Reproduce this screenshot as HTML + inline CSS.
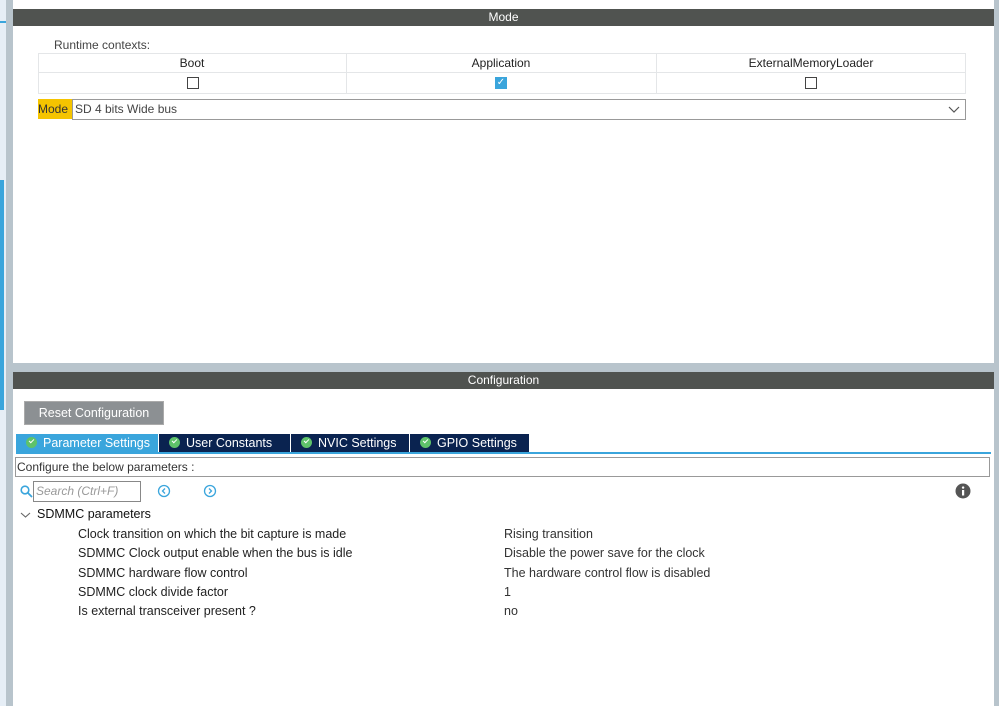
<!DOCTYPE html>
<html><head><style>
*{margin:0;padding:0;box-sizing:border-box}
body{width:999px;height:706px;position:relative;overflow:hidden;background:#fff;font-family:"Liberation Sans",sans-serif;font-size:12px;color:#222}
.a{position:absolute}
.hdr{background:#505350;color:#fff;text-align:center;line-height:17px;font-size:12px}
.cb{width:12px;height:12px;border:1px solid #444;background:#fff}
.tab{position:absolute;top:434px;height:18px;background:#0a2350;color:#fff;line-height:18px;font-size:12.5px;padding-left:10px}
.ck{display:inline-block;width:11px;height:11px;border-radius:50%;background:#5ec26a;vertical-align:-1px;margin-right:6px;position:relative}
.ck:after{content:"";position:absolute;left:3px;top:2px;width:4px;height:2px;border-left:1.5px solid #fff;border-bottom:1.5px solid #fff;transform:rotate(-45deg)}
.row{position:absolute;left:78px;font-size:12.5px;color:#222}
.val{position:absolute;left:504px;font-size:12.5px;color:#333}
</style></head><body>
<div class="a" style="left:0;top:0;width:6px;height:706px;background:#e6eef6"></div>
<div class="a" style="left:0;top:21px;width:6px;height:2px;background:#3aa5dc"></div>
<div class="a" style="left:0;top:180px;width:4px;height:230px;background:#3aa5dc"></div>
<div class="a" style="left:6px;top:0;width:7px;height:706px;background:#b8c4cc"></div>
<div class="a" style="left:994px;top:0;width:5px;height:706px;background:#b8c4cc"></div>
<div class="a" style="left:13px;top:363px;width:981px;height:9px;background:#b8c4cc"></div>
<div class="a hdr" style="left:13px;top:9px;width:981px;height:17px">Mode</div>
<div class="a" style="left:54px;top:38px;color:#444">Runtime contexts:</div>
<div class="a" style="left:38px;top:53px;width:928px;height:41px;border:1px solid #e4e6e8"></div>
<div class="a" style="left:38px;top:72px;width:928px;height:1px;background:#e4e6e8"></div>
<div class="a" style="left:346px;top:53px;width:1px;height:41px;background:#e4e6e8"></div>
<div class="a" style="left:656px;top:53px;width:1px;height:41px;background:#e4e6e8"></div>
<div class="a" style="left:38px;top:56px;width:308px;text-align:center">Boot</div>
<div class="a" style="left:346px;top:56px;width:310px;text-align:center">Application</div>
<div class="a" style="left:656px;top:56px;width:310px;text-align:center">ExternalMemoryLoader</div>
<div class="a cb" style="left:187px;top:77px"></div>
<div class="a" style="left:495px;top:77px;width:12px;height:12px;background:#3aa5dc;color:#fff;font-size:10px;line-height:12px;text-align:center">✓</div>
<div class="a cb" style="left:805px;top:77px"></div>
<div class="a" style="left:38px;top:99px;width:34px;height:20px;background:#f5c400;line-height:20px;color:#333">Mode</div>
<div class="a" style="left:72px;top:99px;width:894px;height:21px;border:1px solid #999;line-height:19px;padding-left:2px;color:#444">SD 4 bits Wide bus</div>
<svg class="a" style="left:948px;top:104px" width="12" height="10"><path d="M1 3 L6 8 L11 3" stroke="#555" fill="none" stroke-width="1.2"/></svg>
<div class="a hdr" style="left:13px;top:372px;width:981px;height:17px">Configuration</div>
<div class="a" style="left:24px;top:401px;width:140px;height:24px;background:#8c9093;border:1px solid #aaa;color:#fff;text-align:center;line-height:22px;font-size:12.5px">Reset Configuration</div>
<div class="tab" style="left:16px;width:142px;background:#3aa5dc"><span class="ck"></span>Parameter Settings</div>
<div class="tab" style="left:159px;width:131px"><span class="ck"></span>User Constants</div>
<div class="tab" style="left:291px;width:118px"><span class="ck"></span>NVIC Settings</div>
<div class="tab" style="left:410px;width:119px"><span class="ck"></span>GPIO Settings</div>
<div class="a" style="left:16px;top:452px;width:975px;height:2px;background:#3aa5dc"></div>
<div class="a" style="left:15px;top:457px;width:975px;height:20px;border:1px solid #999;line-height:18px;padding-left:1px;color:#333">Configure the below parameters :</div>
<svg class="a" style="left:20px;top:485px" width="13" height="13"><circle cx="5" cy="5" r="3.8" stroke="#3aa5dc" stroke-width="1.6" fill="none"/><path d="M8 8 L12 12" stroke="#3aa5dc" stroke-width="1.8"/></svg>
<div class="a" style="left:33px;top:481px;width:108px;height:21px;border:1px solid #888;line-height:19px;padding-left:2px;color:#999;font-style:italic">Search (Ctrl+F)</div>
<svg class="a" style="left:157px;top:484px" width="14" height="14"><circle cx="7" cy="7" r="5.5" stroke="#3aa5dc" stroke-width="1.3" fill="none"/><path d="M8 4.5 L5.5 7 L8 9.5" stroke="#3aa5dc" stroke-width="1.3" fill="none"/></svg>
<svg class="a" style="left:203px;top:484px" width="14" height="14"><circle cx="7" cy="7" r="5.5" stroke="#3aa5dc" stroke-width="1.3" fill="none"/><path d="M6 4.5 L8.5 7 L6 9.5" stroke="#3aa5dc" stroke-width="1.3" fill="none"/></svg>
<svg class="a" style="left:955px;top:483px" width="16" height="16"><circle cx="8" cy="8" r="7.5" fill="#555"/><rect x="7" y="7" width="2.2" height="5.5" fill="#fff"/><circle cx="8.1" cy="4.6" r="1.2" fill="#fff"/></svg>
<svg class="a" style="left:20px;top:511px" width="11" height="8"><path d="M1 2 L5.5 6 L10 2" stroke="#666" fill="none" stroke-width="1.1"/></svg>
<div class="a" style="left:37px;top:507px;font-size:12.5px;color:#111">SDMMC parameters</div>
<div class="row" style="top:527px">Clock transition on which the bit capture is made</div>
<div class="row" style="top:546px">SDMMC Clock output enable when the bus is idle</div>
<div class="row" style="top:566px">SDMMC hardware flow control</div>
<div class="row" style="top:585px">SDMMC clock divide factor</div>
<div class="row" style="top:604px">Is external transceiver present ?</div>
<div class="val" style="top:527px">Rising transition</div>
<div class="val" style="top:546px">Disable the power save for the clock</div>
<div class="val" style="top:566px">The hardware control flow is disabled</div>
<div class="val" style="top:585px">1</div>
<div class="val" style="top:604px">no</div>
</body></html>
